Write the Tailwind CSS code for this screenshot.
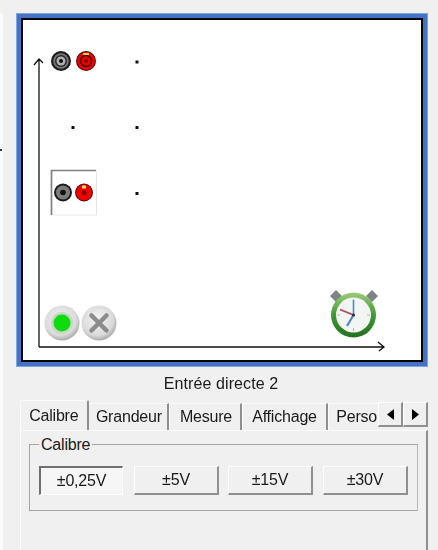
<!DOCTYPE html>
<html lang="fr">
<head>
  <meta charset="UTF-8">
  <title>Entrée directe 2</title>
  <script src="https://cdn.jsdelivr.net/npm/@tailwindcss/browser@4"></script>
</head>
<body class="bg-[#f0f0f0] font-['Liberation_Sans',Arial,sans-serif] text-[#1a1a1a] overflow-hidden">
<div class="relative w-[438px] h-[550px] overflow-hidden blur-[0.35px]">
  <div class="absolute left-0 top-[13px] bottom-0 w-[3px] bg-[#fafafa]"></div>
  <div class="absolute left-0 top-[149px] w-[2px] h-[2px] bg-[#333]"></div>

  <div class="pt-[13px] pl-[16px]">
    <!-- graph frame -->
    <div class="w-[412px] h-[354px] border border-[#7fa6dc] bg-[#4472c4] p-[4px]">
      <div class="w-full h-full border-2 border-black bg-white">
        <svg width="396" height="340" viewBox="23 19 396 340" class="block">
          <defs>
            <radialGradient id="btn" cx="45%" cy="40%" r="65%">
              <stop offset="0" stop-color="#f4f4f4"/><stop offset="0.7" stop-color="#dadada"/><stop offset="1" stop-color="#9c9c9c"/>
            </radialGradient>
            <linearGradient id="ring" x1="0" y1="0" x2="0" y2="1">
              <stop offset="0" stop-color="#9ccc7a"/><stop offset="0.5" stop-color="#3f9a35"/><stop offset="1" stop-color="#23701f"/>
            </linearGradient>
          </defs>
          <path d="M39 346V58M34 64L39 58L43 62M39 346H384M378 341L384 346L379 350" fill="none" stroke="#111" stroke-width="1.300"/>

          <g>
            <circle cx="61" cy="60" r="10" fill="#1c1c1c"/>
            <circle cx="61" cy="60" r="7.800" fill="#777"/>
            <circle cx="61" cy="60" r="6" fill="#2a2a2a"/>
            <circle cx="61" cy="60" r="4.500" fill="#b0b0b0"/>
            <circle cx="61" cy="60" r="2" fill="#111"/>
            <circle cx="86" cy="60" r="10" fill="#4a0808"/>
            <circle cx="86" cy="60" r="9" fill="#f00000"/>
            <circle cx="86" cy="60" r="5.500" fill="none" stroke="#480000" stroke-width="1.600"/>
            <circle cx="86" cy="60" r="2.200" fill="#8a0000"/>
            <rect x="83" y="52" width="6" height="2" fill="#f7d24a"/>
          </g>

          <path d="M51.500 214V169.500H96" fill="none" stroke="#808080" stroke-width="1.700"/>
          <path d="M52 214H96.500V170" fill="none" stroke="#e6e6e6" stroke-width="1"/>
          <g>
            <circle cx="63" cy="191.500" r="9" fill="#1c1c1c"/>
            <circle cx="63" cy="191.500" r="7" fill="#7c7c7c"/>
            <circle cx="63" cy="191.500" r="2.800" fill="#111"/>
            <circle cx="84" cy="191.500" r="9" fill="#4a0b0b"/>
            <circle cx="84" cy="191.500" r="8" fill="#f20000"/>
            <circle cx="84" cy="191.500" r="2.600" fill="#8a0000"/>
            <rect x="82" y="184.500" width="4" height="3" fill="#f7e04a"/>
          </g>

          <rect x="135.500" y="59.500" width="3" height="3" fill="#111"/>
          <rect x="71.500" y="125" width="3" height="3" fill="#111"/>
          <rect x="135.500" y="125" width="3" height="3" fill="#111"/>
          <rect x="135.500" y="191" width="3" height="3" fill="#111"/>

          <circle cx="62" cy="322" r="17.500" fill="url(#btn)"/>
          <circle cx="62" cy="322" r="11" fill="#c4d8c4"/>
          <circle cx="62" cy="322" r="8.500" fill="#0fdc0f"/>
          <circle cx="99" cy="322" r="17.500" fill="url(#btn)"/>
          <path d="M91.500 314.500L106.500 329.500M106.500 314.500L91.500 329.500" stroke="#8c8c8c" stroke-width="4.500" stroke-linecap="round"/>

          <path d="M336 289l6 6l-6 6l-6-6zM372 289l6 6l-6 6l-6-6z" fill="#7f8483"/>
          <circle cx="353.500" cy="314" r="22.500" fill="url(#ring)"/>
          <circle cx="353.500" cy="314" r="17.500" fill="#f3f5f3"/>
          <path d="M353.500 298v3M353.500 327v3M337 314h3M367 314h3" stroke="#b5b5b5" stroke-width="1"/>
          <path d="M353.500 314V299" stroke="#4f86d8" stroke-width="1.600"/>
          <path d="M353.500 314L347 325" stroke="#4f86d8" stroke-width="2.200"/>
          <path d="M353.500 314L340 308.500" stroke="#b5464a" stroke-width="1.800"/>
          <circle cx="353.500" cy="314" r="1.600" fill="#333"/>
        </svg>
      </div>
    </div>
  </div>

  <p class="w-full pl-[4px] mt-[7px] text-center text-[16px] leading-[20px] tracking-[0.1px]">Entrée directe 2</p>

  <!-- tabs -->
  <div class="relative ml-[20px] mt-[6px] w-[408px]">
    <div class="flex items-end h-[30px] text-[16px] tracking-[-0.2px] overflow-hidden w-[358px]">
      <div class="relative z-10 w-[69px] h-[30px] pt-[3px] text-center border-t border-l border-[#fbfbfb] border-r-2 border-r-[#8f8f8f] rounded-t-[2px]">Calibre</div>
      <div class="w-[81px] h-[27px] pt-[1px] pl-[2px] text-center border-t border-[#fbfbfb] border-r-2 border-r-[#8f8f8f]">Grandeur</div>
      <div class="w-[73px] h-[27px] pt-[1px] pl-[2px] text-center border-t border-l border-[#fbfbfb] border-r-2 border-r-[#8f8f8f]">Mesure</div>
      <div class="w-[87px] h-[27px] pt-[1px] text-center border-t border-l border-[#fbfbfb] border-r-2 border-r-[#8f8f8f]">Affichage</div>
      <div class="w-[50px] h-[27px] pt-[1px] pl-[7px] border-t border-l border-[#fbfbfb] whitespace-nowrap">Perso</div>
    </div>
    <div class="absolute left-[358px] top-[2px] flex">
      <div class="w-[25px] h-[25px] flex items-center justify-center bg-[#f0f0f0] border-t border-l border-white border-r-2 border-b-2 border-r-[#8f8f8f] border-b-[#8f8f8f]">
        <svg width="7" height="11" viewBox="0 0 7 11" class="block"><path d="M7 0V11L0 5.500Z" fill="#000"/></svg>
      </div>
      <div class="w-[25px] h-[25px] flex items-center justify-center bg-[#f0f0f0] border-t border-l border-white border-r-2 border-b-2 border-r-[#8f8f8f] border-b-[#8f8f8f]">
        <svg width="7" height="11" viewBox="0 0 7 11" class="block"><path d="M0 0V11L7 5.500Z" fill="#000"/></svg>
      </div>
    </div>

    <!-- panel -->
    <div class="w-[408px] h-[130px] border-t border-l border-[#fbfbfb] border-r-2 border-r-[#8f8f8f] pt-[7px] pl-[8px]">
      <fieldset class="relative w-[389px] h-[67px] border border-[#a4a4a4] border-r-[#b8b8b8] mt-[6px]">
        <span class="absolute left-[9px] top-[-9px] bg-[#f0f0f0] px-[2px] text-[16px] leading-[18px] tracking-[-0.2px]">Calibre</span>
        <div class="flex pt-[21px] pl-[9px] text-[16px] tracking-[-0.2px]">
          <div class="w-[84px] h-[29px] mr-[11px] flex items-center justify-center bg-[#f6f6f6] border-t-2 border-l-2 border-[#6f6f6f] border-r border-b border-r-white border-b-white">±0,25V</div>
          <div class="w-[85px] h-[29px] mr-[9px] flex items-center justify-center border-t border-l border-white border-r-2 border-b-2 border-r-[#8f8f8f] border-b-[#8f8f8f]">±5V</div>
          <div class="w-[85px] h-[29px] mr-[10px] flex items-center justify-center border-t border-l border-white border-r-2 border-b-2 border-r-[#8f8f8f] border-b-[#8f8f8f]">±15V</div>
          <div class="w-[85px] h-[29px] flex items-center justify-center border-t border-l border-white border-r-2 border-b-2 border-r-[#8f8f8f] border-b-[#8f8f8f]">±30V</div>
        </div>
      </fieldset>
    </div>
  </div>
</div>
</body>
</html>
